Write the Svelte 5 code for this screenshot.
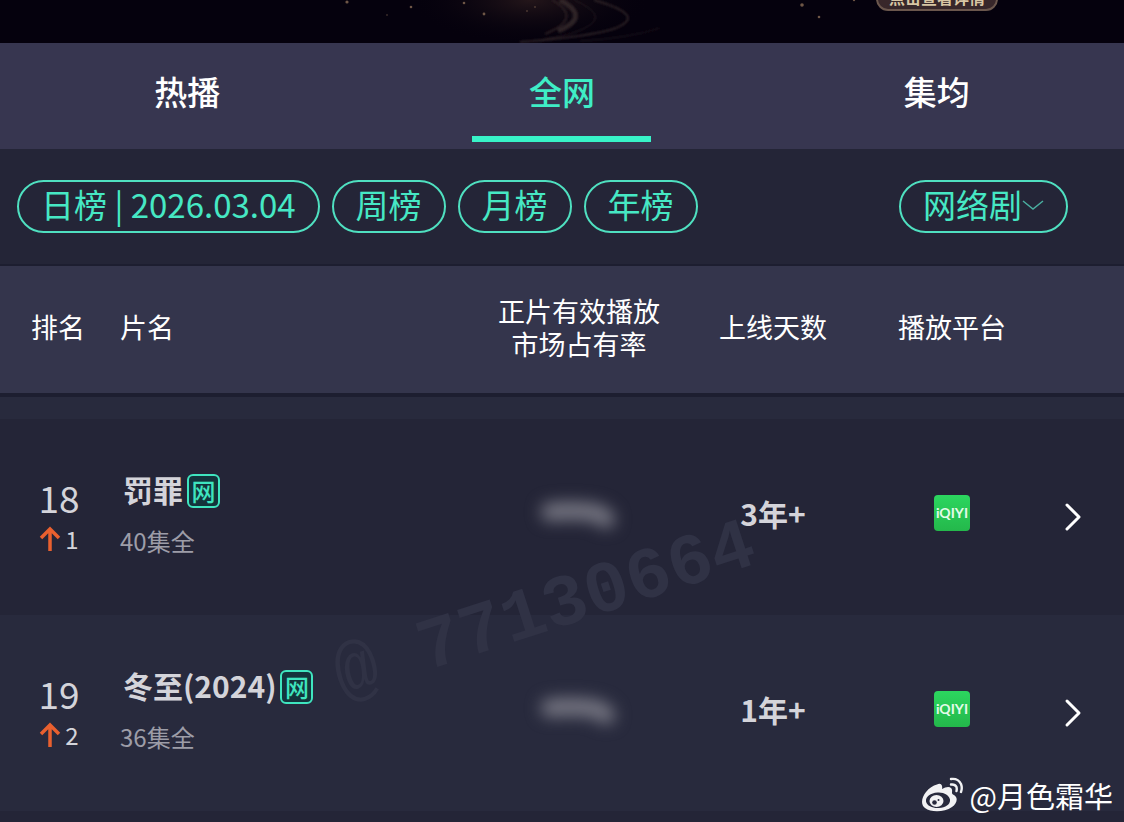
<script>
  const tabs = ['热播', '全网', '集均'];
  const periods = ['日榜 | 2026.03.04', '周榜', '月榜', '年榜'];
  const rows = [
    { rank: 18, up: 1, title: '罚罪', episodes: '40集全', days: '3年+' },
    { rank: 19, up: 2, title: '冬至(2024)', episodes: '36集全', days: '1年+' }
  ];
  let active = $state('全网');
</script>

<div class="page">
  <header class="banner">
    <svg class="sky" viewBox="0 0 1124 43" preserveAspectRatio="xMidYMin slice" aria-hidden="true">
      <defs>
        <radialGradient id="glow" cx="0.5" cy="0.5" r="0.5">
          <stop offset="0" stop-color="#24161a" />
          <stop offset="1" stop-color="#05010d" stop-opacity="0" />
        </radialGradient>
        <filter id="soft"><feGaussianBlur stdDeviation="0.8" /></filter>
      </defs>
      <ellipse cx="530" cy="0" rx="120" ry="44" fill="url(#glow)" />
      <g fill="none" stroke="#3a2c2d" filter="url(#soft)">
        <path d="M552 0Q584 18 545 34" opacity=".6" stroke-width="2" />
        <path d="M560 0Q592 17 558 31" stroke-width="5" opacity=".7" />
        <path d="M574 0Q606 14 590 25Q578 34 545 39" opacity=".6" />
        <path d="M594 0Q642 14 622 25Q608 35 520 42" opacity=".7" stroke-width="2" />
        <path d="M660 28Q630 38 580 41" opacity=".5" />
      </g>
      <g fill="#6e5646">
        <circle cx="347" cy="2" r="1.6" /><circle cx="411" cy="7" r="1.3" />
        <circle cx="464" cy="3" r="1.3" /><circle cx="484" cy="14" r="1.4" />
        <circle cx="527" cy="11" r=".8" /><circle cx="387" cy="15" r=".7" />
        <circle cx="535" cy="7" r=".8" />
        <circle cx="802" cy="5" r="1.8" /><circle cx="819" cy="17" r="1.3" />
        <circle cx="854" cy="0" r="1.2" />
      </g>
    </svg>
    <button class="detail">点击查看详情</button>
  </header>

  <nav class="tabs">
    {#each tabs as tab}
      <button class="tab" class:active={tab === active} onclick={() => (active = tab)}>{tab}</button>
    {/each}
  </nav>

  <div class="filters">
    {#each periods as period}
      <button class="pill">{period}</button>
    {/each}
    <button class="pill kind">网络剧<svg width="22" height="12" viewBox="0 0 22 12" aria-hidden="true"><path d="M1 3L11 11L21 3" fill="none" stroke="#4aaea0" stroke-width="1.5" /></svg></button>
  </div>

  <table>
    <colgroup>
      <col class="c-rank" /><col /><col class="c-share" /><col class="c-days" /><col class="c-site" /><col class="c-go" />
    </colgroup>
    <thead>
      <tr>
        <th class="rank">排名</th>
        <th class="name">片名</th>
        <th>正片有效播放<br />市场占有率</th>
        <th>上线天数</th>
        <th>播放平台</th>
        <th></th>
      </tr>
    </thead>
    <tbody>
      <tr class="spacer"><td colspan="6"></td></tr>
      {#each rows as row}
        <tr class="show">
          <td class="rank">
            <div class="number">{row.rank}</div>
            <div class="change">
              <svg width="22" height="26" viewBox="0 0 22 26" aria-hidden="true"><path d="M11 25V3M2 12L11 3L20 12" fill="none" stroke="#e9602f" stroke-width="3.5" /></svg>{row.up}
            </div>
          </td>
          <td class="name">
            <div class="title">{row.title}<span class="tag">网</span></div>
            <div class="episodes">{row.episodes}</div>
          </td>
          <td class="value">
            <svg class="hidden-share" width="100" height="60" viewBox="0 0 100 60" aria-hidden="true"><path d="M21 29Q52 26 70 31L77 36" fill="none" stroke="#777783" stroke-width="18" stroke-linecap="round" stroke-linejoin="round" /></svg>
          </td>
          <td class="value days">{row.days}</td>
          <td class="value"><span class="site">iQIYI</span></td>
          <td class="go">
            <svg width="18" height="30" viewBox="0 0 18 30" aria-hidden="true"><path d="M3 3L15 15L3 27" fill="none" stroke="#fff" stroke-width="3" stroke-linecap="round" stroke-linejoin="round" /></svg>
          </td>
        </tr>
      {/each}
    </tbody>
  </table>

  <div class="watermark"><span>@</span> 77130664</div>

  <div class="credit">
    <svg width="42" height="36" viewBox="0 0 42 36" aria-hidden="true">
      <path fill="#f2f2f4" fill-rule="evenodd" d="M15 7.500C18 5.500 21 7 20 12C25 9 31 9 30 15C30 16 30 17 31 17.500C37 20 35 27 30 30C22 35.500 9 35.500 3 31C-2 27 0 20 4 15C7 11 11 8.500 15 7.500ZM15.500 15.500C8 16 3.500 20 4 24.500C5 29 11 31.500 17 31C24 30.500 28.500 27 28 22.500C27 18 22 15 15.500 15.500Z" />
      <ellipse cx="14.500" cy="24" rx="7" ry="6" fill="#f2f2f4" />
      <circle cx="12.500" cy="25.500" r="2.300" fill="#282a3d" />
      <circle cx="16.500" cy="23" r="1" fill="#282a3d" />
      <path d="M29 2Q36 1 39 7Q40.500 11 39 15M29 7.500Q33 7 34.500 10Q35 12 34.500 14" fill="none" stroke="#f2f2f4" stroke-width="2.400" stroke-linecap="round" />
    </svg>
    <span>@月色霜华</span>
  </div>
</div>

<style>
  :global(body) {
    margin: 0;
    background: #242537;
  }
  .page {
    position: relative;
    overflow: hidden;
    min-height: 100vh;
    background: #242537;
    color: #fff;
    font-family: 'Noto Sans CJK SC', sans-serif;
  }
  button {
    font: inherit;
    color: inherit;
    background: none;
    border: 0;
    padding: 0;
    cursor: pointer;
  }
  svg {
    display: block;
    flex: none;
  }
  .banner {
    position: relative;
    height: 43px;
    overflow: hidden;
    background: #05010d;
  }
  .sky {
    width: 100%;
    height: 43px;
  }
  .detail {
    position: absolute;
    right: 126px;
    bottom: 32px;
    width: 122px;
    height: 28px;
    border: 2px solid #6b574d;
    border-radius: 12px;
    background: #38272a;
    color: #d8c6a4;
    font-size: 16px;
    line-height: 24px;
    font-weight: 700;
  }
  .tabs {
    display: grid;
    grid-template-columns: repeat(3, 1fr);
    padding-bottom: 7px;
    background: #373650;
  }
  .tab {
    justify-self: center;
    width: 179px;
    height: 99px;
    border-bottom: 6px solid transparent;
    font-size: 33px;
    line-height: 96px;
    font-weight: 500;
  }
  .tab.active {
    color: #3fedc6;
    border-color: #38f3c8;
  }
  .filters {
    display: flex;
    align-items: center;
    gap: 12px;
    padding: 31px 56px 31px 17px;
    background: #242537;
    border-bottom: 2px solid #1d1e30;
  }
  .pill {
    display: flex;
    align-items: center;
    height: 53px;
    padding: 0 22px 6px;
    border: 2px solid #4fe0c0;
    border-radius: 27px;
    color: #46e8c4;
    font-size: 33px;
    line-height: 48px;
    white-space: nowrap;
  }
  .kind {
    margin-left: auto;
  }
  table {
    width: 100%;
    table-layout: fixed;
    border-collapse: collapse;
  }
  .c-rank { width: 112px; }
  .c-share { width: 190px; }
  .c-days { width: 198px; }
  .c-site { width: 160px; }
  .c-go { width: 92px; }
  th,
  td {
    padding: 0;
    text-align: center;
  }
  th {
    height: 121px;
    padding-bottom: 6px;
    background: #34354c;
    border-bottom: 4px solid #1d1e30;
    font-size: 27px;
    line-height: 33px;
    font-weight: 400;
  }
  th.rank {
    text-align: left;
    padding-left: 31px;
  }
  .name {
    text-align: left;
    padding-left: 8px;
  }
  .spacer td {
    height: 22px;
    background: #282a3d;
  }
  .show td {
    box-sizing: border-box;
    height: 196px;
    background: #282a3d;
  }
  .show:nth-child(even) td {
    background: #242537;
  }
  td.rank {
    padding: 0 0 4px 6px;
    color: #d4d4da;
  }
  .number {
    font-size: 37px;
    line-height: 48px;
  }
  .change {
    display: flex;
    align-items: center;
    justify-content: center;
    gap: 4px;
    font-size: 24px;
    line-height: 36px;
  }
  .title {
    display: flex;
    align-items: flex-end;
    gap: 4px;
    padding-left: 3px;
    color: #d4d4da;
    font-size: 30px;
    line-height: 38px;
    font-weight: 700;
  }
  .tag {
    width: 29px;
    height: 30px;
    border: 2px solid #3fe5bf;
    border-radius: 6px;
    background: #14343c;
    color: #3fe5bf;
    font-size: 24px;
    line-height: 29px;
    font-weight: 500;
    text-align: center;
  }
  .episodes {
    margin-top: 9px;
    color: #9d9da8;
    font-size: 24px;
    line-height: 48px;
  }
  td.value {
    padding-bottom: 8px;
  }
  .hidden-share {
    margin: 0 auto;
    filter: blur(8px);
  }
  .days {
    color: #d4d4da;
    font-size: 30px;
    font-weight: 700;
  }
  .site {
    display: block;
    width: 36px;
    height: 36px;
    margin: 0 auto;
    border-radius: 4px;
    background: linear-gradient(#2cd65f, #24b84b);
    color: #e4fbe9;
    font: 700 14px/36px 'Lato', sans-serif;
  }
  td.go {
    padding-right: 10px;
  }
  .go svg {
    margin: 0 auto;
  }
  .watermark {
    position: absolute;
    left: 326px;
    top: 572px;
    color: #303245;
    font: 700 73px/80px 'Liberation Mono', monospace;
    white-space: pre;
    transform: rotate(-18deg);
    pointer-events: none;
  }
  .watermark span {
    font-weight: 400;
  }
  .credit {
    position: absolute;
    right: 11px;
    bottom: 5px;
    display: flex;
    align-items: center;
    gap: 6px;
    font-size: 29px;
    line-height: 44px;
  }
</style>
